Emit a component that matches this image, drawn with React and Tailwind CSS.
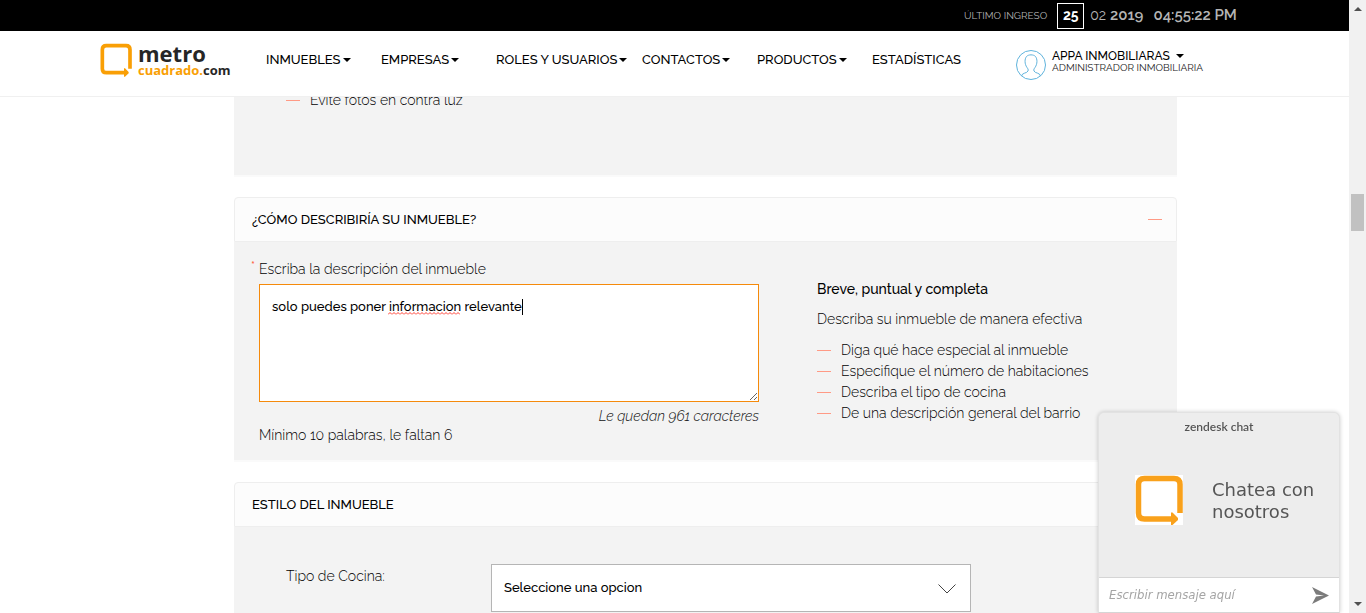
import React from "react";

const NAV = [
  { label: "INMUEBLES", menu: true },
  { label: "EMPRESAS", menu: true },
  { label: "ROLES Y USUARIOS", menu: true, wide: true },
  { label: "CONTACTOS", menu: true },
  { label: "PRODUCTOS", menu: true },
  { label: "ESTADÍSTICAS", menu: false },
];

const TIPS = [
  "Diga qué hace especial al inmueble",
  "Especifique el número de habitaciones",
  "Describa el tipo de cocina",
  "De una descripción general del barrio",
];

function Caret() {
  return (
    <svg viewBox="0 0 8 4" className="h-1 w-2 shrink-0" aria-hidden="true">
      <path d="M0 0h8L4 4z" fill="#000" />
    </svg>
  );
}

function Dash() {
  return <span className="h-px w-3.5 shrink-0 bg-[#ff9a85]" aria-hidden="true" />;
}

function BrandMark({ className }) {
  return (
    <svg viewBox="0 0 48 50" className={className} aria-hidden="true">
      <path
        d="M45 38V9.500Q45 3.500 39 3.500H9.500Q3.500 3.500 3.500 9.500V38Q3.500 44 9.500 44H37"
        fill="none"
        stroke="currentColor"
        strokeWidth="5.500"
      />
      <path d="M36 37.500h1.500L43 43v2l-5.500 5H36z" fill="currentColor" />
    </svg>
  );
}

function TopBar() {
  return (
    <div className="flex h-[31px] shrink-0 items-center bg-black pl-[964px] text-[#b5b5b5]">
      <span className="text-[10px] whitespace-nowrap">ÚLTIMO INGRESO</span>
      <span className="ml-2.5 flex h-[26px] w-[27px] shrink-0 items-center justify-center border border-white text-[14px] font-bold text-white">
        25
      </span>
      <span className="ml-1.5 text-[14px]">02</span>
      <span className="ml-1 text-[15px] font-semibold">2019</span>
      <span className="ml-2.5 text-[15px] font-semibold whitespace-nowrap">04:55:22 PM</span>
    </div>
  );
}

function Header() {
  return (
    <header className="flex h-[66px] shrink-0 border-b border-[#f0f0f0] bg-white pl-[100px]">
      <a href="#inicio" className="flex w-[166px] shrink-0 items-start gap-1.5 pt-3" aria-label="metrocuadrado.com">
        <BrandMark className="h-[34px] w-8 shrink-0 text-[#f99f05]" />
        <span className="flex flex-col font-['Open_Sans',sans-serif] font-bold">
          <span className="text-[22px] leading-[20px] text-[#262626]">metro</span>
          <span className="text-[13px] leading-[14px] text-[#f99f05]">
            cuadrado.<span className="text-[#262626]">com</span>
          </span>
        </span>
      </a>
      <nav className="flex items-start pt-5">
        {NAV.map((item) => (
          <a
            key={item.label}
            href="#menu"
            className={
              "flex shrink-0 items-center gap-0.5 text-[13px] leading-[18px] font-medium whitespace-nowrap text-black " +
              (item.wide ? "w-[146px]" : "w-[115px]")
            }
          >
            {item.label}
            {item.menu && <Caret />}
          </a>
        ))}
      </nav>
      <button type="button" className="ml-[29px] flex items-start gap-1.5 pt-[18px] text-left">
        <svg viewBox="0 0 30 30" className="mt-px h-[30px] w-[30px] shrink-0" fill="none" stroke="#5fb3dc" aria-hidden="true">
          <circle cx="15" cy="15" r="14.500" />
          <path d="M5.500 26c.5-3.500 5.500-2.500 6.500-5 .6-1.500-.3-2.500-1-3.500-2.500-3.500-2.500-8.500-.5-11 2-2.200 7-2.200 9 0 2 2.500 2 7.500-.5 11-.7 1-1.600 2-1 3.500 1 2.500 6 1.500 6.500 5" />
        </svg>
        <span className="flex flex-col whitespace-nowrap">
          <span className="flex items-center gap-1.5 text-[12px] leading-[14px] font-medium text-black">
            APPA INMOBILIARAS <Caret />
          </span>
          <span className="text-[10px] leading-[10px] text-[#222]">ADMINISTRADOR INMOBILIARIA</span>
        </span>
      </button>
    </header>
  );
}

function PanelHeader({ title, open }) {
  return (
    <div className="flex h-[45px] items-center justify-between rounded-t-sm border border-[#eeeeee] bg-[#fcfcfc] pr-3.5 pl-[17px]">
      <h2 className="text-[13px] font-medium text-black">{title}</h2>
      {open && (
        <button type="button" aria-label="Contraer" className="flex h-4 items-center">
          <Dash />
        </button>
      )}
    </div>
  );
}

function DescriptionPanel() {
  return (
    <section className="mt-5 border-b-2 border-[#fafafa]">
      <PanelHeader title="¿CÓMO DESCRIBIRÍA SU INMUEBLE?" open />
      <div className="flex h-[218px] bg-[#f3f3f3] pl-[25px]">
        <div className="w-[500px] shrink-0 pt-4">
          <label htmlFor="descripcion" className="relative block text-[14px] leading-[22px] font-light text-black">
            <span className="absolute top-0 -left-2 text-[12px] leading-4 font-medium text-[#ff5a3c]">*</span>
            Escriba la descripción del inmueble
          </label>
          <div className="relative mt-1">
            <textarea
              id="descripcion"
              spellCheck={false}
              defaultValue="solo puedes poner informacion relevante"
              className="block h-[118px] w-full border border-[#f58a0b] bg-white px-3 py-3 text-[13px] leading-5 font-medium text-black outline-none"
            />
            <svg className="pointer-events-none absolute top-7 left-[129px] h-[3px] w-[72px]" aria-hidden="true">
              <defs>
                <pattern id="wave" width="4" height="3" patternUnits="userSpaceOnUse">
                  <path d="M0 2.500L2 .5L4 2.500" fill="none" stroke="#ff3b30" />
                </pattern>
              </defs>
              <rect width="72" height="3" fill="url(#wave)" />
            </svg>
            <span className="pointer-events-none absolute top-[15px] left-[263px] h-4 w-px bg-black" />
          </div>
          <p className="mt-1 text-right text-[14px] leading-5 font-light text-[#111] italic">Le quedan 961 caracteres</p>
          <p className="text-[14px] leading-[18px] font-light text-black">Mínimo 10 palabras, le faltan 6</p>
        </div>
        <div className="ml-[58px] pt-[37px] text-[14px] font-light whitespace-nowrap text-black">
          <h3 className="text-[14px] leading-5 font-medium">Breve, puntual y completa</h3>
          <p className="mt-2.5 leading-5">Describa su inmueble de manera efectiva</p>
          <ul className="mt-[11px]">
            {TIPS.map((tip) => (
              <li key={tip} className="flex items-center gap-2.5 leading-[21px]">
                <Dash />
                {tip}
              </li>
            ))}
          </ul>
        </div>
      </div>
    </section>
  );
}

function StylePanel() {
  return (
    <section className="mt-5">
      <PanelHeader title="ESTILO DEL INMUEBLE" />
      <div className="flex h-[120px] bg-[#f3f3f3] pt-[37px] pl-[52px]">
        <label htmlFor="cocina" className="w-[205px] shrink-0 text-[14px] leading-6 font-light text-black">
          Tipo de Cocina:
        </label>
        <div className="relative h-12 w-[480px]">
          <select
            id="cocina"
            className="h-full w-full appearance-none border border-[#b5b5b5] bg-white px-3 text-[13px] font-medium text-black"
          >
            <option>Seleccione una opcion</option>
          </select>
          <svg
            viewBox="0 0 18 10"
            className="pointer-events-none absolute top-5 right-[15px] h-2.5 w-[18px]"
            fill="none"
            stroke="#444"
            aria-hidden="true"
          >
            <path d="M.5 .5L9 9L17.500 .5" />
          </svg>
        </div>
      </div>
    </section>
  );
}

function ChatWidget() {
  return (
    <aside className="fixed right-[26px] bottom-0 flex w-[242px] flex-col overflow-hidden rounded-t-md border border-[#e2e2e2] border-b-[#d5d5d5] bg-[#ededed] font-['DejaVu_Sans',sans-serif] text-[#555] shadow-[0_0_4px_rgba(0,0,0,0.2)]">
      <p className="pt-1.5 text-center font-[Lato,sans-serif] text-[12px] leading-4 font-semibold">zendesk chat</p>
      <div className="flex h-[142px] items-start gap-[29px] pt-10 pl-9">
        <span className="h-[50px] w-12 shrink-0 bg-white">
          <BrandMark className="h-full w-full text-[#f9a11b]" />
        </span>
        <p className="pt-1 text-[18px] leading-[22px]">
          Chatea con
          <br />
          nosotros
        </p>
      </div>
      <form className="flex h-[35px] items-center border-t border-[#d5d5d5] bg-white pr-2.5 pl-2.5">
        <input
          type="text"
          aria-label="Escribir mensaje"
          placeholder="Escribir mensaje aquí"
          className="min-w-0 flex-1 font-['DejaVu_Sans_Condensed','DejaVu_Sans',sans-serif] text-[13px] italic outline-none placeholder:text-[#a5a5a5]"
        />
        <button type="button" aria-label="Enviar">
          <svg viewBox="0 0 17 17" className="h-[17px] w-[17px]" aria-hidden="true">
            <path d="M0 0L17 8.500L0 17L4 9.500L12 8.500L4 7.500z" fill="#7b7b7b" />
          </svg>
        </button>
      </form>
    </aside>
  );
}

function ScrollTrack() {
  return (
    <div className="flex w-[17px] shrink-0 flex-col items-center bg-[#f1f1f1] py-[7px]" aria-hidden="true">
      <svg viewBox="0 0 8 4" className="h-1 w-2">
        <path d="M0 4h8L4 0z" fill="#505050" />
      </svg>
      <div className="mt-[183px] h-[37px] w-[13px] bg-[#c1c1c1]" />
      <svg viewBox="0 0 8 4" className="mt-auto h-1 w-2">
        <path d="M0 0h8L4 4z" fill="#505050" />
      </svg>
    </div>
  );
}

export default function App() {
  return (
    <div className="flex h-screen overflow-hidden bg-white font-[Raleway,Lato,sans-serif]">
      <div className="flex min-w-0 flex-1 flex-col overflow-hidden">
        <TopBar />
        <Header />
        <main className="min-h-0 flex-1 overflow-hidden pl-[234px]">
          <div className="max-w-[943px]">
            <section className="flow-root h-20 border-b-2 border-[#fafafa] bg-[#f3f3f3] pl-[52px]">
              <ul className="-mt-2 text-[14px] leading-[22px] font-light text-black">
                <li className="flex items-center gap-2.5">
                  <Dash />
                  Evite fotos en contra luz
                </li>
              </ul>
            </section>
            <DescriptionPanel />
            <StylePanel />
          </div>
        </main>
      </div>
      <ScrollTrack />
      <ChatWidget />
    </div>
  );
}
